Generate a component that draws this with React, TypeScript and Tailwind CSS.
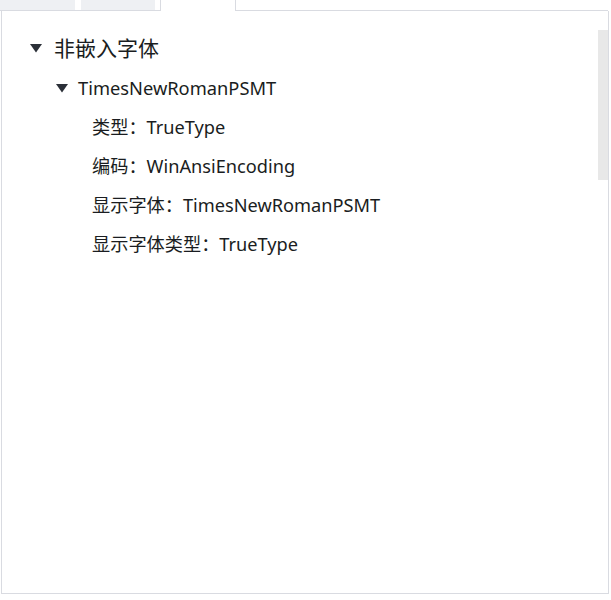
import { Fragment } from 'react';

const fontStack = '"Noto Sans", "Noto Sans CJK SC", sans-serif';

function Caret({ className }: { className?: string }) {
  return (
    <svg viewBox="0 0 12 9" className={className} fill="#2b3038">
      <path d="M0 0 H12 L6 8.5 Z" />
    </svg>
  );
}

const props = [
  { label: '类型', value: 'TrueType' },
  { label: '编码', value: 'WinAnsiEncoding' },
  { label: '显示字体', value: 'TimesNewRomanPSMT' },
  { label: '显示字体类型', value: 'TrueType' },
];

export default function App() {
  return (
    <div className="w-[611px] h-[600px] bg-white flex flex-col" style={{ fontFamily: fontStack }}>
      {/* Tab strip (bottom edge only visible) */}
      <div className="flex h-[11px] shrink-0">
        <div className="w-[161px] flex gap-[6px] border-b border-r border-[#d9dbe1]">
          <div className="w-[75px] bg-[#eef0f3]" />
          <div className="w-[74px] bg-[#eef0f3]" />
        </div>
        <div className="w-[74px] bg-white" />
        <div className="flex-1 border-l border-b border-[#d9dbe1] mr-[3px]" />
      </div>

      {/* Panel */}
      <div className="relative ml-[1px] w-[608px] h-[583px] border-l border-r border-b border-[#d9dbe1] bg-white text-[#1a1d21]">
        <div className="pt-[25px] pl-[28px]">
          <div className="flex items-center h-[24px]">
            <Caret className="w-[12px] h-[9px]" />
            <span className="ml-[12px] text-[21px] leading-none">非嵌入字体</span>
          </div>
          <div className="flex items-center h-[24px] mt-[16px] pl-[26px]">
            <Caret className="w-[12px] h-[9px]" />
            <span className="ml-[10px] text-[18.3px] leading-none">TimesNewRomanPSMT</span>
          </div>
          <div className="pl-[62px] mt-[15px] flex flex-col gap-[15px] text-[18.2px]">
            {props.map((p) => (
              <Fragment key={p.label}>
                <div className="h-[24px] flex items-center leading-none">
                  {p.label}：{p.value}
                </div>
              </Fragment>
            ))}
          </div>
        </div>

        {/* Scrollbar thumb */}
        <div className="absolute right-[0px] top-[19px] w-[10px] h-[150px] bg-[#e8e8e8]" />
      </div>
    </div>
  );
}
